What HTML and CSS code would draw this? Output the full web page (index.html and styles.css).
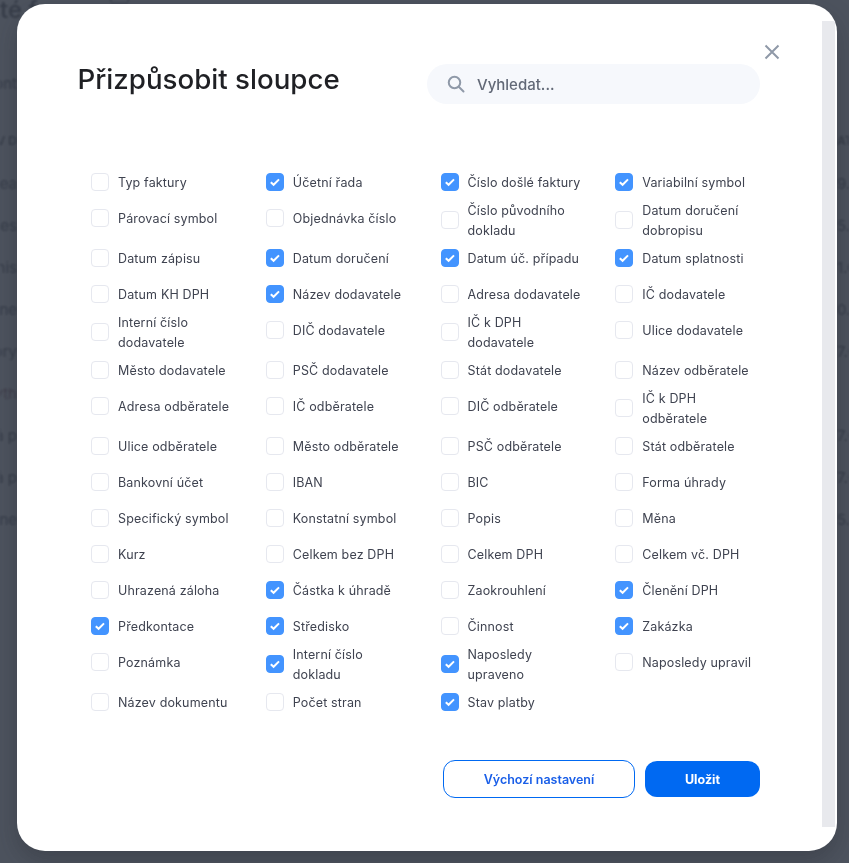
FILE: index.html
```html
<!DOCTYPE html>
<html lang="cs">

<head>
    <meta charset="utf-8" />
    <meta name="viewport" content="width=device-width, initial-scale=1">
    <title>Přizpůsobit sloupce</title>
    <link rel="stylesheet" href="styles.css">
</head>

<body>
    <div class="page" aria-hidden="true">
        <div class="page-title">té fa</div>
        <div class="page-tool"></div>
        <div class="page-row page-row-first"><span>ont</span><span></span></div>
        <div class="page-row page-head"><span>EV D</span><span>AT</span></div>
        <div class="page-row"><span>rea</span><span>9.0</span></div>
        <div class="page-row"><span>es</span><span>5.1</span></div>
        <div class="page-row"><span>nis</span><span>1.0</span></div>
        <div class="page-row"><span>lne</span><span>0.0</span></div>
        <div class="page-row"><span>iory</span><span>7.0</span></div>
        <div class="page-row page-row-red"><span>yth</span><span></span></div>
        <div class="page-row"><span>ká p</span><span>7.0</span></div>
        <div class="page-row"><span>ká p</span><span>7.0</span></div>
        <div class="page-row"><span>lne</span><span>5.0</span></div>
    </div>

    <div class="overlay">
        <section class="modal">
            <button class="close" aria-label="Zavřít">
                <svg width="16" height="16" viewBox="0 0 16 16" fill="none" stroke="currentColor" stroke-width="2">
                    <path d="M1.5 1.5l13 13M14.5 1.5l-13 13" />
                </svg>
            </button>
            <div class="scrollbar"></div>

            <header class="modal-head">
                <h1>Přizpůsobit sloupce</h1>
                <label class="search">
                    <svg width="18" height="18" viewBox="0 0 18 18" fill="none" stroke="currentColor" stroke-width="2">
                        <circle cx="7.5" cy="7.5" r="5.75" />
                        <path d="M12 12l4.5 4.5" stroke-linecap="round" />
                    </svg>
                    <input type="text" placeholder="Vyhledat...">
                </label>
            </header>

            <div class="columns">
                <label class="col"><input type="checkbox"><span>Typ faktury</span></label>
                <label class="col"><input type="checkbox" checked><span>Účetní řada</span></label>
                <label class="col"><input type="checkbox" checked><span>Číslo došlé faktury</span></label>
                <label class="col"><input type="checkbox" checked><span>Variabilní symbol</span></label>

                <label class="col"><input type="checkbox"><span>Párovací symbol</span></label>
                <label class="col"><input type="checkbox"><span>Objednávka číslo</span></label>
                <label class="col"><input type="checkbox"><span>Číslo původního dokladu</span></label>
                <label class="col"><input type="checkbox"><span>Datum doručení dobropisu</span></label>

                <label class="col"><input type="checkbox"><span>Datum zápisu</span></label>
                <label class="col"><input type="checkbox" checked><span>Datum doručení</span></label>
                <label class="col"><input type="checkbox" checked><span>Datum úč. případu</span></label>
                <label class="col"><input type="checkbox" checked><span>Datum splatnosti</span></label>

                <label class="col"><input type="checkbox"><span>Datum KH DPH</span></label>
                <label class="col"><input type="checkbox" checked><span>Název dodavatele</span></label>
                <label class="col"><input type="checkbox"><span>Adresa dodavatele</span></label>
                <label class="col"><input type="checkbox"><span>IČ dodavatele</span></label>

                <label class="col"><input type="checkbox"><span>Interní číslo dodavatele</span></label>
                <label class="col"><input type="checkbox"><span>DIČ dodavatele</span></label>
                <label class="col"><input type="checkbox"><span>IČ k DPH dodavatele</span></label>
                <label class="col"><input type="checkbox"><span>Ulice dodavatele</span></label>

                <label class="col"><input type="checkbox"><span>Město dodavatele</span></label>
                <label class="col"><input type="checkbox"><span>PSČ dodavatele</span></label>
                <label class="col"><input type="checkbox"><span>Stát dodavatele</span></label>
                <label class="col"><input type="checkbox"><span>Název odběratele</span></label>

                <label class="col"><input type="checkbox"><span>Adresa odběratele</span></label>
                <label class="col"><input type="checkbox"><span>IČ odběratele</span></label>
                <label class="col"><input type="checkbox"><span>DIČ odběratele</span></label>
                <label class="col"><input type="checkbox"><span>IČ k DPH odběratele</span></label>

                <label class="col"><input type="checkbox"><span>Ulice odběratele</span></label>
                <label class="col"><input type="checkbox"><span>Město odběratele</span></label>
                <label class="col"><input type="checkbox"><span>PSČ odběratele</span></label>
                <label class="col"><input type="checkbox"><span>Stát odběratele</span></label>

                <label class="col"><input type="checkbox"><span>Bankovní účet</span></label>
                <label class="col"><input type="checkbox"><span>IBAN</span></label>
                <label class="col"><input type="checkbox"><span>BIC</span></label>
                <label class="col"><input type="checkbox"><span>Forma úhrady</span></label>

                <label class="col"><input type="checkbox"><span>Specifický symbol</span></label>
                <label class="col"><input type="checkbox"><span>Konstatní symbol</span></label>
                <label class="col"><input type="checkbox"><span>Popis</span></label>
                <label class="col"><input type="checkbox"><span>Měna</span></label>

                <label class="col"><input type="checkbox"><span>Kurz</span></label>
                <label class="col"><input type="checkbox"><span>Celkem bez DPH</span></label>
                <label class="col"><input type="checkbox"><span>Celkem DPH</span></label>
                <label class="col"><input type="checkbox"><span>Celkem vč. DPH</span></label>

                <label class="col"><input type="checkbox"><span>Uhrazená záloha</span></label>
                <label class="col"><input type="checkbox" checked><span>Částka k úhradě</span></label>
                <label class="col"><input type="checkbox"><span>Zaokrouhlení</span></label>
                <label class="col"><input type="checkbox" checked><span>Členění DPH</span></label>

                <label class="col"><input type="checkbox" checked><span>Předkontace</span></label>
                <label class="col"><input type="checkbox" checked><span>Středisko</span></label>
                <label class="col"><input type="checkbox"><span>Činnost</span></label>
                <label class="col"><input type="checkbox" checked><span>Zakázka</span></label>

                <label class="col"><input type="checkbox"><span>Poznámka</span></label>
                <label class="col"><input type="checkbox" checked><span>Interní číslo dokladu</span></label>
                <label class="col"><input type="checkbox" checked><span>Naposledy upraveno</span></label>
                <label class="col"><input type="checkbox"><span>Naposledy upravil</span></label>

                <label class="col"><input type="checkbox"><span>Název dokumentu</span></label>
                <label class="col"><input type="checkbox"><span>Počet stran</span></label>
                <label class="col"><input type="checkbox" checked><span>Stav platby</span></label>
            </div>

            <footer class="modal-foot">
                <button class="btn btn-outline">Výchozí nastavení</button>
                <button class="btn btn-primary">Uložit</button>
            </footer>
        </section>
    </div>
</body>

</html>
```

FILE: styles.css
```css
:root {
    --text-color: #3f4350;
    --title-color: #1f2024;
    --border-color: #e6e8ef;
    --check-color: #4394ff;
    --primary-color: #0069f2;
    --muted-color: #8f99a8;
}

* {
    box-sizing: border-box;
}

html,
body {
    height: 100%;
}

body {
    margin: 0;
    overflow: hidden;
    background-color: #fff;
    font-family: Inter, "Liberation Sans", sans-serif;
    color: var(--text-color);
}

/* page behind the modal, only its blurred edges are visible */
.page {
    position: fixed;
    inset: 0;
    display: flex;
    flex-direction: column;
    filter: blur(0.8px);
    font-size: 15px;
    color: #15171f;
}

.page-title {
    height: 28px;
    margin-top: -4px;
    font-size: 24px;
    font-weight: 500;
    line-height: 28px;
    white-space: nowrap;
}

.page-tool {
    position: absolute;
    top: -14px;
    left: 110px;
    width: 19px;
    height: 18px;
    border: 1px solid #15171f;
    border-radius: 4px;
}

.page-row {
    display: flex;
    justify-content: space-between;
    align-items: center;
    height: 42px;
}

.page-row span {
    display: flex;
    overflow: hidden;
    white-space: nowrap;
}

.page-row span:first-child {
    justify-content: flex-end;
    width: 17px;
}

.page-row span:last-child {
    width: 12px;
}

.page-row-first {
    margin-top: 38px;
}

.page-head {
    height: 44px;
    margin-top: 14px;
    font-size: 12px;
    font-weight: 600;
}

.page-row-red {
    color: #6b2436;
}

.overlay {
    position: fixed;
    inset: 0;
    padding: 4px 12px 12px 17px;
    background-color: rgba(58, 64, 77, 0.9);
}

.modal {
    position: relative;
    width: 820px;
    height: 847px;
    padding: 60px 77px 0 61px;
    border-radius: 28px;
    background-color: #fff;
    box-shadow: 0 10px 24px rgba(30, 32, 40, 0.3);
}

.close {
    position: absolute;
    top: 40px;
    right: 57px;
    display: flex;
    padding: 0;
    border: 0;
    background: none;
    color: var(--muted-color);
    cursor: pointer;
}

.scrollbar {
    position: absolute;
    top: 17px;
    right: 2px;
    bottom: 24px;
    width: 13px;
    background-color: #e8e9ed;
}

.modal-head {
    display: flex;
    justify-content: space-between;
    align-items: center;
}

h1 {
    margin: -10px 0 0 -0.5px;
    font-size: 27.7px;
    font-weight: 500;
    line-height: 32px;
    color: var(--title-color);
}

.search {
    display: flex;
    align-items: center;
    gap: 10px;
    width: 333px;
    height: 40px;
    padding-left: 20px;
    border-radius: 20px;
    background-color: #f6f8fc;
    color: var(--muted-color);
}

.search input {
    flex: 1;
    min-width: 0;
    border: 0;
    outline: none;
    background: none;
    font: 500 15px Inter, sans-serif;
}

.search input::placeholder {
    color: #626977;
    opacity: 1;
}

.columns {
    display: grid;
    grid-template-columns: repeat(4, 1fr);
    align-items: start;
    margin: 61px -30px 0 13px;
}

.col {
    display: flex;
    align-items: center;
    gap: 9px;
    min-height: 36px;
    font-size: 12.5px;
    line-height: 20px;
    letter-spacing: 0.15px;
    cursor: pointer;
}

.col span {
    max-width: 118px;
}

.col input {
    appearance: none;
    flex: none;
    width: 18px;
    height: 18px;
    margin: 0 0 2px;
    border: 1px solid var(--border-color);
    border-radius: 4px;
    background-color: #fff;
    cursor: pointer;
}

.col input:checked {
    border-color: var(--check-color);
    background-color: var(--check-color);
    background-image: url("data:image/svg+xml,%3Csvg xmlns='http://www.w3.org/2000/svg' viewBox='0 0 16 16'%3E%3Cpath d='M3.8 8.2l2.8 2.6 5.4-5.4' fill='none' stroke='%23fff' stroke-width='2'/%3E%3C/svg%3E");
    background-size: 16px 16px;
}

.modal-foot {
    display: flex;
    justify-content: flex-end;
    align-items: center;
    gap: 10px;
    margin-top: 39px;
}

.btn {
    height: 36px;
    border: 0;
    border-radius: 12px;
    font: 700 12.5px Inter, sans-serif;
    cursor: pointer;
}

.btn-outline {
    width: 192px;
    height: 38px;
    border: 1px solid var(--primary-color);
    background-color: #fff;
    color: #1a5fe8;
    font-weight: 600;
}

.btn-primary {
    width: 115px;
    background-color: var(--primary-color);
    color: #fff;
}
```
